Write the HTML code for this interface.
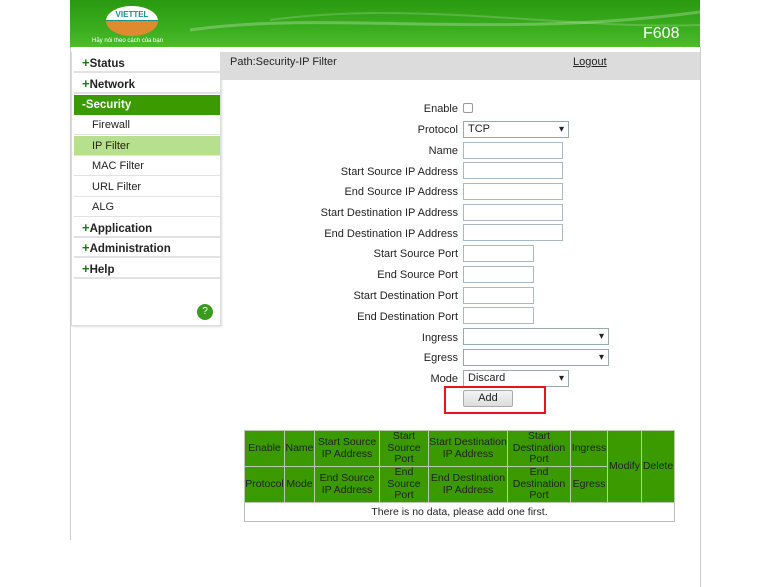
<!DOCTYPE html>
<html><head><meta charset="utf-8"><style>
*{margin:0;padding:0;box-sizing:border-box}
body{width:772px;height:540px;background:#fff;font-family:"Liberation Sans",Tahoma,sans-serif;font-size:11px;color:#222;position:relative;overflow:hidden}
.a{position:absolute}
.hdr{left:70px;top:0;width:630px;height:47px;background:linear-gradient(180deg,#2a9a10 0%,#3aad1e 60%,#4cbb2c 100%);}
.vl{top:0;width:1px;height:540px;background:#ccc}
.side{left:71px;top:52px;width:150px;height:274px;border:1px solid #ddd;border-top:none;box-shadow:1px 1px 2px #ddd}
.it{position:absolute;left:2px;width:146px;height:20px;border-bottom:2px solid #e2e2e2;line-height:20px;font-weight:bold;font-size:11.5px;padding-left:8px}
.it b{color:#1a7a10;font-size:13px}
.sub{font-weight:normal;padding-left:18px;font-size:11px;border-bottom:1px solid #e2e2e2}
.lbl{position:absolute;right:314px;width:200px;text-align:right;font-size:11px;margin-top:1px}
.in{position:absolute;left:463px;height:17px;border:1px solid #a9b8c8;background:#fff}
.sel{font-size:11px;padding-left:4px;line-height:15px;border-color:#9aa}
.sel:after{content:"▾";position:absolute;right:4px;top:0;font-size:10px}
table{position:absolute;left:244px;top:430px;width:430px;border-collapse:collapse;font-size:10.5px;text-align:center;table-layout:fixed}
th{background:#3a9a00;color:#222;font-weight:normal;border:1px solid #b9c9a9;height:36px;line-height:11.5px;padding:0}
td{border:1px solid #bbb;height:19px}
</style></head><body>
<div class="a vl" style="left:70px"></div>
<div class="a vl" style="left:700px;top:47px"></div>
<div class="a hdr">
 <svg class="a" style="left:0;top:0" width="630" height="47"><path d="M120 30 C260 10 420 40 630 12" stroke="rgba(255,255,255,.25)" stroke-width="3" fill="none"/><path d="M200 20 C350 0 500 30 630 25" stroke="rgba(255,255,255,.18)" stroke-width="2" fill="none"/></svg>
 <div class="a" style="left:36px;top:6px;width:52px;height:30px;border-radius:50%;background:#e08a30;overflow:hidden"><div style="height:15px;background:#fff;border-bottom:1px solid #1a8f8a"></div></div>
 <div class="a" style="left:36px;top:10px;width:52px;text-align:center;font-size:8px;font-weight:bold;color:#1a8f8a">VIETTEL</div>
 <div class="a" style="left:22px;top:38px;font-size:6px;color:#fff">Hãy nói theo cách của bạn</div>
 <div class="a" style="left:573px;top:25px;font-size:16px;color:#fff">F608</div>
</div>
<div class="a side">
 <div class="it" style="top:1px"><b>+</b>Status</div>
 <div class="it" style="top:22px"><b>+</b>Network</div>
 <div class="it" style="top:43px;background:#3a9a00;color:#fff;border-bottom:none">-Security</div>
 <div class="it sub" style="top:63px">Firewall</div>
 <div class="it sub" style="top:84px;background:#b6e08e">IP Filter</div>
 <div class="it sub" style="top:104px">MAC Filter</div>
 <div class="it sub" style="top:125px">URL Filter</div>
 <div class="it sub" style="top:145px">ALG</div>
 <div class="it" style="top:166px"><b>+</b>Application</div>
 <div class="it" style="top:186px"><b>+</b>Administration</div>
 <div class="it" style="top:207px"><b>+</b>Help</div>
 <div class="a" style="left:125px;top:252px;width:16px;height:16px;border-radius:50%;background:#3a9a20;color:#fff;text-align:center;line-height:16px;font-size:10px">?</div>
</div>
<div class="a" style="left:221px;top:52px;width:479px;height:28px;background:#dcdcdc"></div>
<div class="a" style="left:230px;top:56px">Path:Security-IP Filter</div>
<div class="a" style="left:573px;top:56px;text-decoration:underline">Logout</div>

<div class="lbl" style="top:102px">Enable</div>
<div class="in" style="top:103px;width:10px;height:10px;border-radius:2px;border-color:#999"></div>
<div class="lbl" style="top:123px">Protocol</div><div class="in sel" style="top:121px;width:106px">TCP</div>
<div class="lbl" style="top:144px">Name</div><div class="in" style="top:142px;width:100px"></div>
<div class="lbl" style="top:165px">Start Source IP Address</div><div class="in" style="top:162px;width:100px"></div>
<div class="lbl" style="top:185px">End Source IP Address</div><div class="in" style="top:183px;width:100px"></div>
<div class="lbl" style="top:206px">Start Destination IP Address</div><div class="in" style="top:204px;width:100px"></div>
<div class="lbl" style="top:227px">End Destination IP Address</div><div class="in" style="top:224px;width:100px"></div>
<div class="lbl" style="top:247px">Start Source Port</div><div class="in" style="top:245px;width:71px"></div>
<div class="lbl" style="top:268px">End Source Port</div><div class="in" style="top:266px;width:71px"></div>
<div class="lbl" style="top:289px">Start Destination Port</div><div class="in" style="top:287px;width:71px"></div>
<div class="lbl" style="top:310px">End Destination Port</div><div class="in" style="top:307px;width:71px"></div>
<div class="lbl" style="top:331px">Ingress</div><div class="in sel" style="top:328px;width:146px"></div>
<div class="lbl" style="top:351px">Egress</div><div class="in sel" style="top:349px;width:146px"></div>
<div class="lbl" style="top:372px">Mode</div><div class="in sel" style="top:370px;width:106px">Discard</div>
<div class="a" style="left:444px;top:386px;width:102px;height:28px;border:2px solid #e8141c"></div>
<div class="a" style="left:463px;top:390px;width:50px;height:17px;border:1px solid #aaa;border-radius:2px;background:linear-gradient(#f4f4f4,#dcdcdc);text-align:center;line-height:15px">Add</div>

<table>
<colgroup><col style="width:40px"><col style="width:30px"><col style="width:65px"><col style="width:49px"><col style="width:79px"><col style="width:63px"><col style="width:37px"><col style="width:34px"><col style="width:33px"></colgroup>
<tr><th>Enable</th><th>Name</th><th>Start Source IP Address</th><th>Start Source Port</th><th>Start Destination IP Address</th><th>Start Destination Port</th><th>Ingress</th><th rowspan="2">Modify</th><th rowspan="2">Delete</th></tr>
<tr><th>Protocol</th><th>Mode</th><th>End Source IP Address</th><th>End Source Port</th><th>End Destination IP Address</th><th>End Destination Port</th><th>Egress</th></tr>
<tr><td colspan="9">There is no data, please add one first.</td></tr>
</table>
</body></html>
